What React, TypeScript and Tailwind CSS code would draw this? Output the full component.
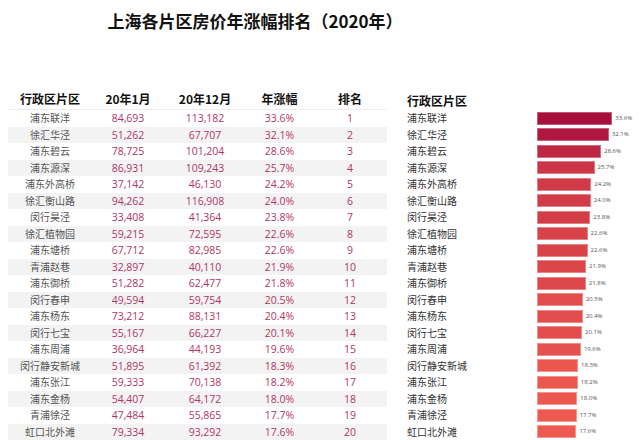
const rows: [string, string, string, number, number][] = [
  ["浦东联洋", "84,693", "113,182", 33.6, 1],
  ["徐汇华泾", "51,262", "67,707", 32.1, 2],
  ["浦东碧云", "78,725", "101,204", 28.6, 3],
  ["浦东源深", "86,931", "109,243", 25.7, 4],
  ["浦东外高桥", "37,142", "46,130", 24.2, 5],
  ["徐汇衡山路", "94,262", "116,908", 24.0, 6],
  ["闵行昊泾", "33,408", "41,364", 23.8, 7],
  ["徐汇植物园", "59,215", "72,595", 22.6, 8],
  ["浦东塘桥", "67,712", "82,985", 22.6, 9],
  ["青浦赵巷", "32,897", "40,110", 21.9, 10],
  ["浦东御桥", "51,282", "62,477", 21.8, 11],
  ["闵行春申", "49,594", "59,754", 20.5, 12],
  ["浦东杨东", "73,212", "88,131", 20.4, 13],
  ["闵行七宝", "55,167", "66,227", 20.1, 14],
  ["浦东周浦", "36,964", "44,193", 19.6, 15],
  ["闵行静安新城", "51,895", "61,392", 18.3, 16],
  ["浦东张江", "59,333", "70,138", 18.2, 17],
  ["浦东金杨", "54,407", "64,172", 18.0, 18],
  ["青浦徐泾", "47,484", "55,865", 17.7, 19],
  ["虹口北外滩", "79,334", "93,292", 17.6, 20],
];

// bar colour runs from deep crimson (max) to salmon red (min)
function barColor(v: number) {
  const t = (33.6 - v) / (33.6 - 17.6);
  const a = [168, 16, 60];
  const b = [238, 90, 80];
  const c = a.map((x, i) => Math.round(x + (b[i] - x) * t));
  return `rgb(${c[0]},${c[1]},${c[2]})`;
}

function barBorder(v: number) {
  const t = (33.6 - v) / (33.6 - 17.6);
  const a = [200, 90, 120];
  const b = [246, 150, 140];
  const c = a.map((x, i) => Math.round(x + (b[i] - x) * t));
  return `rgb(${c[0]},${c[1]},${c[2]})`;
}

const cols = "grid grid-cols-[84px_72px_82px_67px_74px]";

export default function App() {
  return (
    <div className="w-[641px] h-[440px] overflow-hidden bg-white font-['Noto_Sans_CJK_SC',sans-serif]">
      <div className="h-[88px] w-[510px] pt-[8px] text-center">
        <h1 className="text-[17px] font-bold leading-[26px] text-[#111]">
          上海各片区房价年涨幅排名（2020年）
        </h1>
      </div>

      <div className="flex">
        <div className="ml-[8px] w-[379px]">
          <div className={`${cols} h-[22px] items-end border-b border-[#ececec] pb-[2px] text-center text-[12px] font-bold leading-[16px] text-[#111]`}>
            <div>行政区片区</div>
            <div>20年1月</div>
            <div>20年12月</div>
            <div>年涨幅</div>
            <div>排名</div>
          </div>
          {rows.map((r, i) => (
            <div
              key={r[0]}
              className={`${cols} h-[16.5px] items-center text-center text-[10.5px] leading-[16.5px] ${i % 2 === 1 ? "bg-[#f3f3f4]" : "bg-white"}`}
            >
              <div className="text-[10px] text-[#555]">{r[0]}</div>
              <div className="font-['Open_Sans',sans-serif] text-[#b2365f]">{r[1]}</div>
              <div className="font-['Open_Sans',sans-serif] text-[#b2365f]">{r[2]}</div>
              <div className="font-['Open_Sans',sans-serif] text-[#b2365f]">{r[3].toFixed(1)}%</div>
              <div className="font-['Open_Sans',sans-serif] text-[#b2365f]">{r[4]}</div>
            </div>
          ))}
        </div>

        <div className="ml-[20px] flex-1">
          <div className="flex h-[22px] items-end pb-[1px] text-[12px] font-bold leading-[16px] text-[#111]">
            行政区片区
          </div>
          {rows.map((r) => (
            <div key={r[0]} className="flex h-[16.5px] items-center">
              <div className="w-[130px] text-[10px] leading-[16.5px] text-[#333]">{r[0]}</div>
              <div
                className="h-[13px] border"
                style={{ width: r[3] * 2.24, backgroundColor: barColor(r[3]), borderColor: barBorder(r[3]) }}
              />
              <div className="ml-[3px] font-['Open_Sans',sans-serif] text-[6px] text-[#555]">
                {r[3].toFixed(1)}%
              </div>
            </div>
          ))}
        </div>
      </div>
    </div>
  );
}
